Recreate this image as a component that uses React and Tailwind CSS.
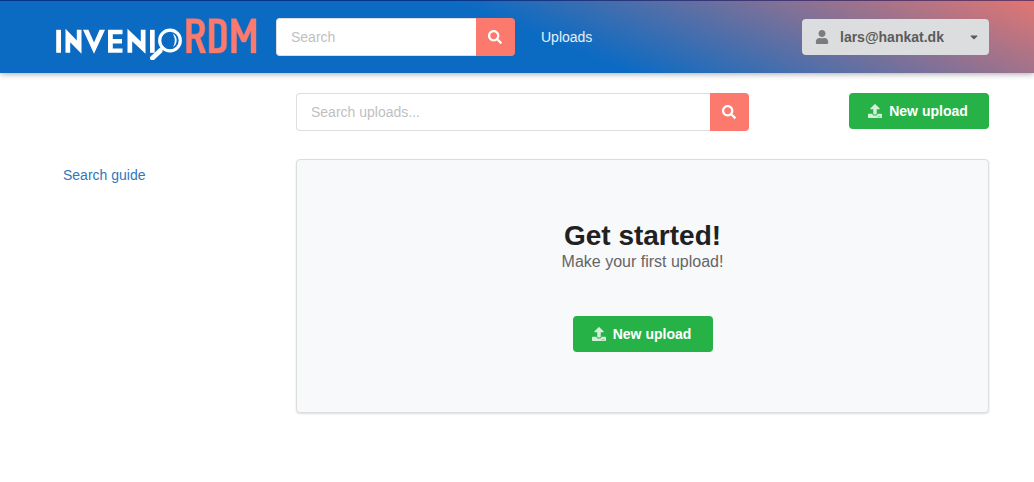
import { FaSearch, FaUser, FaUpload, FaCaretDown } from "react-icons/fa";

function Logo() {
  return (
    <svg width="202" height="46" viewBox="0 0 202 46" role="img" aria-label="InvenioRDM">
      <g fill="#fff">
        <path d="M1.200 15.800H6V38.800H1.200Z" />
        <path d="M10.500 38.800V14.800L21.800 26.500V15.800H26.500V39.800L15.200 28.200V38.800Z" />
        <path d="M28 15.800H33.400L39 28.500L44.600 15.800H50L39 39.800Z" />
        <path d="M53 15.800H67.500V20.200H57.800V25H67V29.400H57.800V34.400H67.500V38.800H53Z" />
        <path d="M72.500 38.800V14.800L85.800 27.500V15.800H90.500V39.800L77.200 27.200V38.800Z" />
        <path d="M95 15.800H99.700V38.800H95Z" />
      </g>
      <circle cx="115" cy="26.500" r="10.300" fill="none" stroke="#fff" strokeWidth="3.200" />
      <path d="M117.500 19.500C123 22 123 30 118 33C120.500 29 120.500 23.500 117.500 19.500Z" fill="#fff" />
      <path d="M108.500 33L104 37" stroke="#fff" strokeWidth="3.500" />
      <path d="M105 37L97.500 44" stroke="#fff" strokeWidth="5" strokeLinecap="round" />
      <g fill="#fb7a6d" stroke="#fb7a6d" strokeWidth="0.400">
        <path fillRule="evenodd" d="M131.500 39V4.700H140.500C147 4.700 149.800 8.500 149.800 14.500C149.800 19.500 148 22.500 145.200 24L151 39H145.500L140.300 24.700H136.500V39ZM136.500 9.400V20.200H140C143.600 20.200 144.800 18.300 144.800 14.800C144.800 11.200 143.600 9.400 140 9.400Z" />
        <path fillRule="evenodd" d="M154.200 39V4.700H162.500C168.500 4.700 171.500 8 171.500 13.500V30.500C171.500 36 168.500 39 162.500 39ZM159.200 9.400V34.300H162C165.200 34.300 166.500 33 166.500 29.800V14C166.500 10.800 165.200 9.400 162 9.400Z" />
        <path d="M176.500 39V4.700H181.200L188.800 21.500L196.300 4.700H201V39H196V16.500L190.800 28H186.800L181.500 16.500V39Z" />
      </g>
    </svg>
  );
}

function SearchBox({ label }) {
  return (
    <form className="flex h-[38px] w-full" onSubmit={(e) => e.preventDefault()}>
      <input
        type="text"
        aria-label={label}
        placeholder={label}
        className="min-w-0 flex-1 rounded-l border border-r-0 border-[#dededf] bg-white px-3.5 text-sm text-[#212121] outline-none placeholder:text-[#bfbfbf]"
      />
      <button type="submit" aria-label="Submit search" className="flex w-[39px] shrink-0 items-center justify-center rounded-r bg-[#fb7a6d] pr-0.5 text-white">
        <FaSearch size={14} />
      </button>
    </form>
  );
}

function UploadButton() {
  return (
    <button type="button" className="flex h-9 w-[140px] items-center justify-center gap-[7px] rounded bg-[#26b247] pr-0.5 text-sm font-bold text-white">
      <FaUpload size={14} className="opacity-80" />
      New upload
    </button>
  );
}

export default function App() {
  return (
    <div className="min-h-screen bg-white font-['Liberation_Sans',Arial,sans-serif] text-sm text-[#212121]">
      <header className="border-t border-[#00005080] bg-[linear-gradient(22deg,#0b6bc3_52%,#e37672_100%)] bg-origin-border shadow-[0_1px_6px_rgba(0,0,0,0.35)]">
        <div className="flex h-[72px] items-center pr-[45px] pl-[55px]">
          <a href="#home" className="mr-[19px] shrink-0"><Logo /></a>
          <div className="w-[239px] shrink-0"><SearchBox label="Search" /></div>
          <nav className="ml-[26px]"><a href="#uploads" className="text-white/90">Uploads</a></nav>
          <button type="button" className="ml-auto flex h-9 w-[187px] items-center rounded bg-[#dcddde] px-[13px] font-bold text-[#5b5b5b]">
            <FaUser size={14} className="mr-[11px] text-[#7b7c7c]" />
            lars@hankat.dk
            <FaCaretDown size={12} className="-mr-1 ml-auto" />
          </button>
        </div>
      </header>
      <main className="grid grid-cols-[233px_1fr] gap-y-7 pt-5 pr-[45px] pl-[63px]">
        <div className="col-start-2 flex items-start justify-between">
          <div className="w-[453px]"><SearchBox label="Search uploads..." /></div>
          <UploadButton />
        </div>
        <aside className="col-start-1 pt-1.5"><a href="#guide" className="text-[#3276ba]">Search guide</a></aside>
        <section className="flex flex-col items-center rounded border border-[#dcdddd] bg-[#f8f9fb] pt-[58px] pb-[60px] shadow-[0_1px_2px_rgba(34,36,38,0.15)]">
          <h1 className="text-[28px] leading-9 font-bold">Get started!</h1>
          <p className="mb-[46px] text-base leading-4 text-[#646565]">Make your first upload!</p>
          <UploadButton />
        </section>
      </main>
    </div>
  );
}
